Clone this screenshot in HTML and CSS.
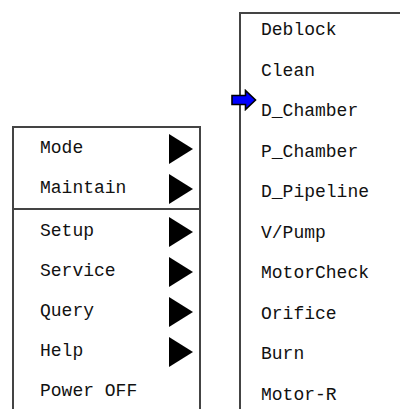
FILE: index.html
```html
<!DOCTYPE html>
<html lang="en">
<head>
    <meta charset="UTF-8">
    <title>Menu</title>
    <link rel="stylesheet" href="styles.css">
</head>
<body>
    <div class="screen">
        <div class="main-menu">
            <ul class="menu-group">
                <li class="menu-item">Mode <span class="sub-arrow"></span></li>
                <li class="menu-item">Maintain <span class="sub-arrow"></span></li>
            </ul>
            <ul class="menu-group second">
                <li class="menu-item">Setup <span class="sub-arrow"></span></li>
                <li class="menu-item">Service <span class="sub-arrow"></span></li>
                <li class="menu-item">Query <span class="sub-arrow"></span></li>
                <li class="menu-item">Help <span class="sub-arrow"></span></li>
                <li class="menu-item">Power OFF</li>
            </ul>
        </div>

        <div class="sub-menu">
            <ul class="sub-list">
                <li class="sub-item">Deblock</li>
                <li class="sub-item">Clean</li>
                <li class="sub-item">D_Chamber</li>
                <li class="sub-item">P_Chamber</li>
                <li class="sub-item">D_Pipeline</li>
                <li class="sub-item">V/Pump</li>
                <li class="sub-item">MotorCheck</li>
                <li class="sub-item">Orifice</li>
                <li class="sub-item">Burn</li>
                <li class="sub-item">Motor-R</li>
            </ul>
            <svg class="pointer" width="26" height="22" viewBox="0 0 26 22">
                <path d="M1 6.5 H14.5 V1.5 L24.5 11 L14.5 20.5 V15.5 H1 Z" fill="#0000ff" stroke="#000" stroke-width="1.6" stroke-linejoin="miter"/>
            </svg>
        </div>
    </div>
</body>
</html>
```

FILE: styles.css
```css
body {
    margin: 0;
    background-color: white;
    font-family: "Liberation Mono", "DejaVu Sans Mono", monospace;
    font-size: 18px;
    color: #111;
}

.screen {
    display: flex;
    align-items: flex-start;
    gap: 38px;
    width: 400px;
    height: 409px;
    padding-left: 12px;
    box-sizing: border-box;
    overflow: hidden;
}

ul {
    list-style-type: none;
    margin: 0;
    padding: 0;
}

/* left menu */
.main-menu {
    width: 185px;
    flex-shrink: 0;
    margin-top: 126px;
    border: 2px solid #444;
}

.menu-group.second {
    border-top: 2px solid #444;
    padding-top: 1px;
}

.menu-item {
    display: flex;
    align-items: center;
    justify-content: space-between;
    height: 40px;
    padding-left: 26px;
    padding-right: 6px;
}

.sub-arrow {
    width: 0;
    height: 0;
    border-left: 24px solid #000;
    border-top: 15px solid transparent;
    border-bottom: 15px solid transparent;
    margin-top: 2px;
}

/* right sub menu */
.sub-menu {
    position: relative;
    width: 240px;
    flex-shrink: 0;
    margin-top: 12px;
    border: 2px solid #444;
}

.sub-item {
    height: 40.5px;
    box-sizing: border-box;
    padding-top: 4px;
    padding-left: 20px;
    line-height: 24px;
}

.pointer {
    position: absolute;
    left: -10px;
    top: 75px;
}
```
